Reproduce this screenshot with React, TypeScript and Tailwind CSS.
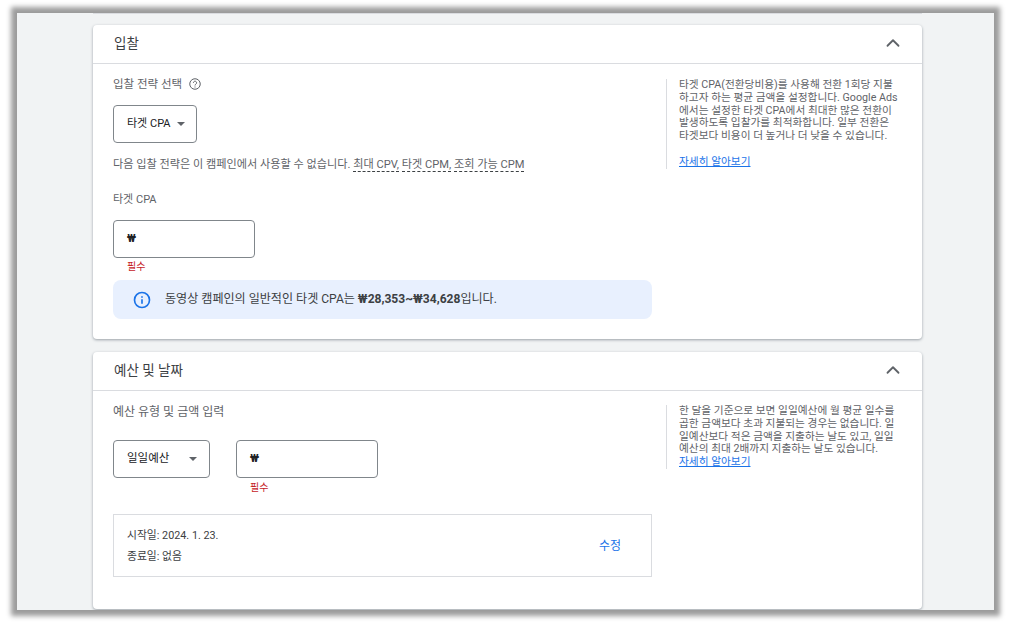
import React from 'react';
import { ChevronUp } from 'lucide-react';

const font = 'font-["Roboto","Noto_Sans_CJK_KR",sans-serif]';

function Caret() {
  return <span className="w-0 h-0 border-x-[4px] border-x-transparent border-t-[4px] border-t-[#5f6368]" />;
}

function CardHeader({ title }: { title: string }) {
  return (
    <div className="h-[39px] flex items-center justify-between pl-5 pr-[18px] border-b border-[#dadce0]">
      <span className="text-[13.5px] pl-px -mt-[2px] text-[#3c4043]">{title}</span>
      <ChevronUp className="w-[22px] h-[22px] text-[#5f6368] -mt-[2px]" strokeWidth={2} />
    </div>
  );
}

function Help({ children, link }: { children: React.ReactNode; link: string }) {
  return (
    <div className="w-[231px] border-l border-[#dadce0] pl-3 text-[10.7px] leading-[12.8px] text-[#5f6368] whitespace-nowrap">
      {children}
      <a className="block text-[#1a73e8] underline">{link}</a>
    </div>
  );
}

function WonInput() {
  return (
    <div className="w-[142px] h-[38px] border border-[#80868b] rounded-[4px] flex items-center pl-[13px] text-[11px] font-bold text-[#202124]">
      ₩
    </div>
  );
}

export default function App() {
  return (
    <div className={`${font} bg-white h-[623px] pt-[13px] pl-[17px]`}>
      <div className="w-[977px] h-[597px] bg-[#f1f3f4] shadow-[0_0_5px_6px_#9c9c9c] overflow-hidden pl-[76px]">
        <div className="w-[829px] h-px bg-[#dadce0]" />

        <section className="w-[829px] h-[314px] mt-[11px] bg-white rounded-[4px] shadow-[0_1px_3px_#9aa0a6]">
          <CardHeader title="입찰" />
          <div className="flex justify-between pl-5 pr-[25px]">
            <div>
              <div className="flex items-center gap-[7px] mt-[14px] h-[14px] text-[11.5px] text-[#5f6368]">
                입찰 전략 선택
                <svg className="-mt-[2px]" width="12" height="12" viewBox="0 0 24 24" fill="none" stroke="#5f6368" strokeWidth="2">
                  <circle cx="12" cy="12" r="10.5" />
                  <path d="M8.8 9.5a3.2 3.2 0 1 1 5 2.7c-1.2.8-1.8 1.5-1.8 2.8M12 17v2" />
                </svg>
              </div>
              <div className="w-[84px] h-[38px] mt-[13px] border border-[#80868b] rounded-[4px] flex items-center pl-[13px] gap-[6px] text-[11px] text-[#202124]">
                타겟 CPA
                <Caret />
              </div>
              <p className="mt-[14px] h-[15px] leading-[15px] text-[11.15px] text-[#5f6368] whitespace-nowrap">
                다음 입찰 전략은 이 캠페인에서 사용할 수 없습니다.{' '}
                <span className="border-b border-dashed border-[#3c4043]">최대 CPV,</span>{' '}
                <span className="border-b border-dashed border-[#3c4043]">타겟 CPM,</span>{' '}
                <span className="border-b border-dashed border-[#3c4043]">조회 가능 CPM</span>
              </p>
              <p className="mt-[20px] h-[15px] leading-[15px] text-[11px] text-[#5f6368]">타겟 CPA</p>
              <div className="mt-[13px]">
                <WonInput />
              </div>
              <p className="pl-[14px] mt-[2px] h-[14px] leading-[14px] text-[10px] text-[#c5221f]">필수</p>
              <div className="w-[539px] h-[39px] mt-[6px] bg-[#e8f0fe] rounded-lg flex items-center pl-5 gap-[14px] text-[12.07px] text-[#3c4043]">
                <svg width="18" height="18" viewBox="0 0 24 24" fill="none" stroke="#1a73e8" strokeWidth="2.2">
                  <circle cx="12" cy="12" r="10" />
                  <path d="M12 11v6M12 7v2" />
                </svg>
                <span>
                  동영상 캠페인의 일반적인 타겟 CPA는 <b className="font-bold">₩28,353~₩34,628</b>입니다.
                </span>
              </div>
            </div>
            <div className="mt-[15px]">
              <Help link="자세히 알아보기">
                타겟 CPA(전환당비용)를 사용해 전환 1회당 지불
                <br />
                하고자 하는 평균 금액을 설정합니다. Google Ads
                <br />
                에서는 설정한 타겟 CPA에서 최대한 많은 전환이
                <br />
                발생하도록 입찰가를 최적화합니다. 일부 전환은
                <br />
                타겟보다 비용이 더 높거나 더 낮을 수 있습니다.
                <br />
                <br />
              </Help>
            </div>
          </div>
        </section>

        <section className="w-[829px] h-[257px] mt-[13px] bg-white rounded-[4px] shadow-[0_1px_3px_#9aa0a6]">
          <CardHeader title="예산 및 날짜" />
          <div className="flex justify-between pl-5 pr-[25px]">
            <div>
              <p className="mt-[14px] h-[15px] leading-[15px] text-[12px] text-[#5f6368]">예산 유형 및 금액 입력</p>
              <div className="flex gap-[26px] mt-[20px]">
                <div className="w-[97px] h-[38px] border border-[#80868b] rounded-[4px] flex items-center justify-between pl-[13px] pr-[12px] text-[11.5px] text-[#202124]">
                  일일예산
                  <Caret />
                </div>
                <WonInput />
              </div>
              <p className="pl-[137px] mt-[3px] h-[14px] leading-[14px] text-[10px] text-[#c5221f]">필수</p>
              <div className="w-[539px] h-[63px] mt-[19px] border border-[#dadce0] flex items-center justify-between pl-[13px] pr-[30px] text-[10.8px] text-[#3c4043]">
                <div className="leading-[21px] pt-px">
                  <p>시작일: 2024. 1. 23.</p>
                  <p>종료일: 없음</p>
                </div>
                <span className="text-[12px] text-[#1a73e8]">수정</span>
              </div>
            </div>
            <div className="mt-[14px]">
              <Help link="자세히 알아보기">
                한 달을 기준으로 보면 일일예산에 월 평균 일수를
                <br />
                곱한 금액보다 초과 지불되는 경우는 없습니다. 일
                <br />
                일예산보다 적은 금액을 지출하는 날도 있고, 일일
                <br />
                예산의 최대 2배까지 지출하는 날도 있습니다.
              </Help>
            </div>
          </div>
        </section>
      </div>
    </div>
  );
}
